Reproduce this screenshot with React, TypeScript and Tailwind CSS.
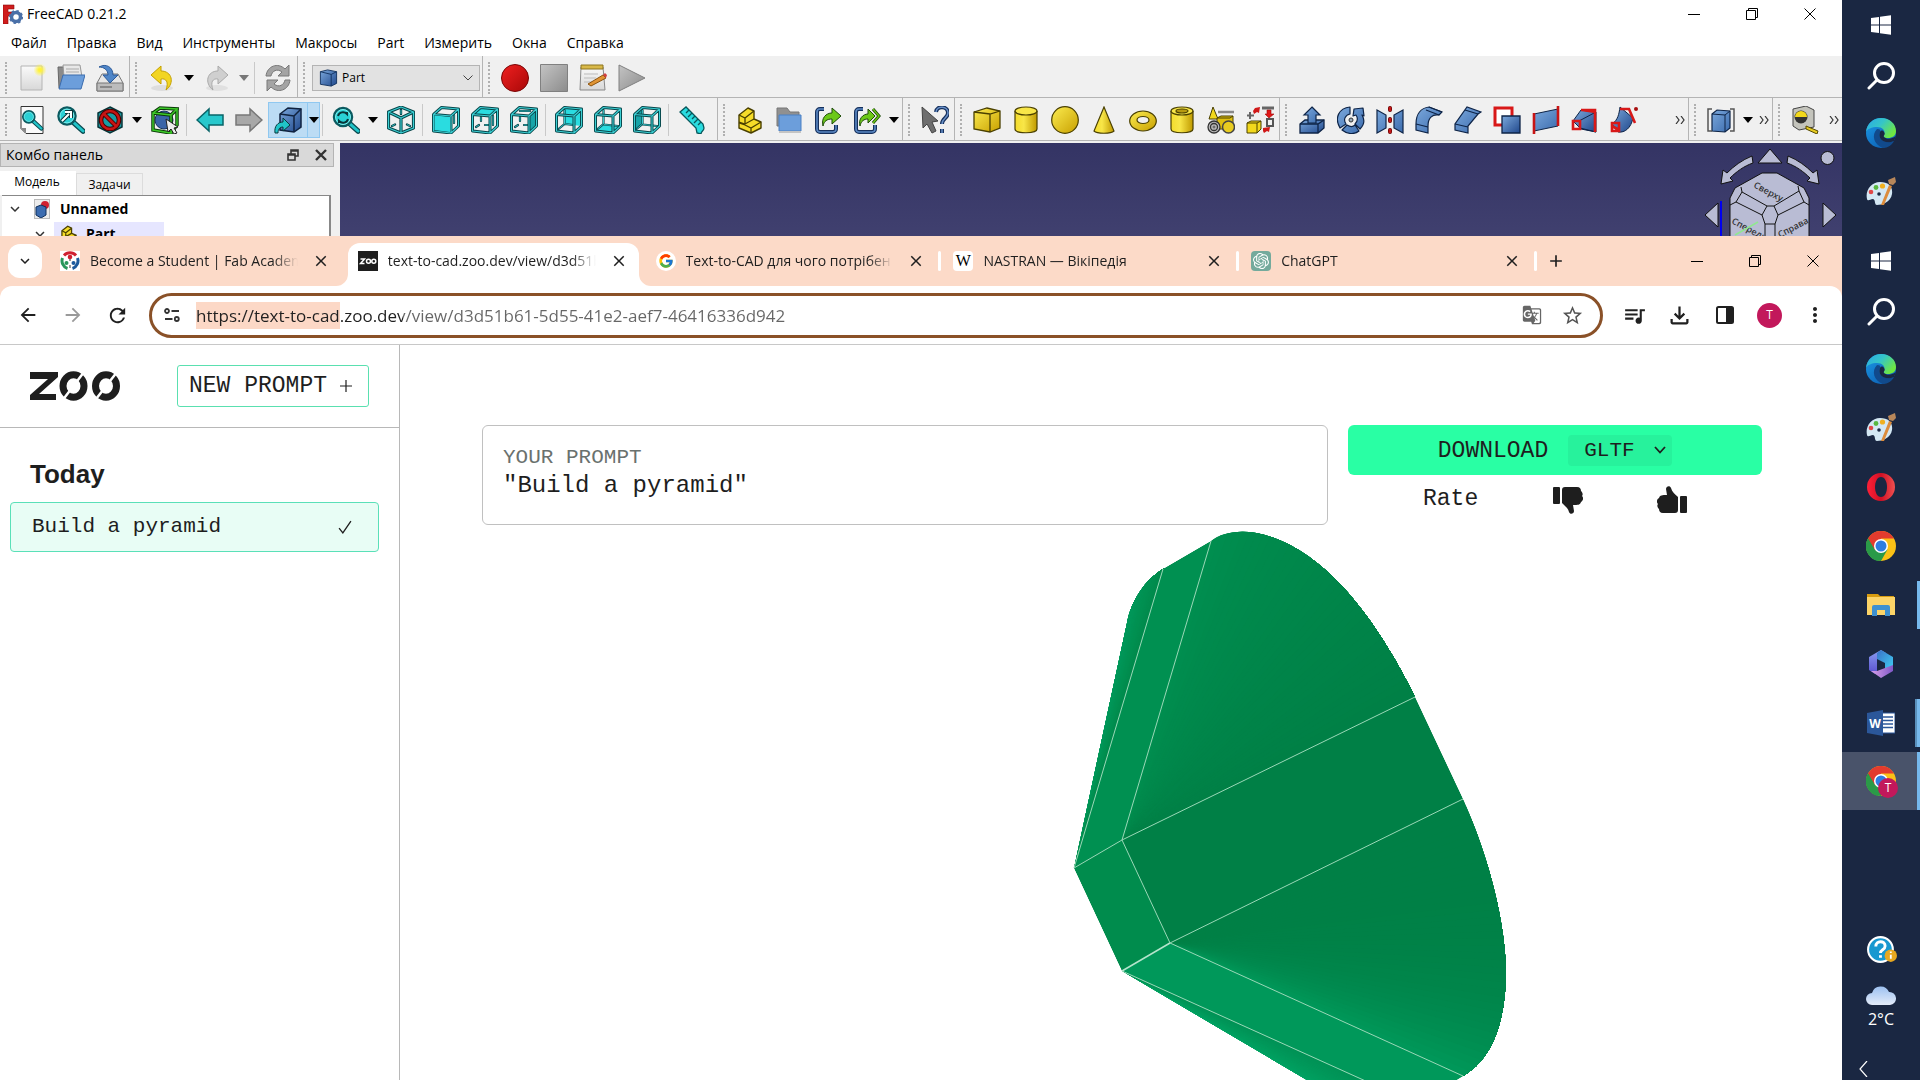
import React from "react";
import {
  MdArrowBack, MdArrowForward, MdRefresh, MdStarBorder, MdQueueMusic, MdOutlineFileDownload,
  MdMoreVert, MdClose, MdAdd, MdExpandMore, MdGTranslate,
} from "react-icons/md";
import { FcGoogle } from "react-icons/fc";
import { SiOpenai } from "react-icons/si";

type Kids = { children?: React.ReactNode };

/* ---------- shared gradients ---------- */

function Defs() {
  return (
    <svg width="0" height="0" className="absolute" aria-hidden="true">
      <defs>
        <linearGradient id="blue" x1="0" y1="0" x2="1" y2="1">
          <stop offset="0" stopColor="#7ba8dc" /><stop offset="1" stopColor="#20488c" />
        </linearGradient>
        <linearGradient id="soft" x1="0" y1="0" x2="1" y2="1">
          <stop offset="0" stopColor="#7ba8dc" /><stop offset="1" stopColor="#3c6cae" />
        </linearGradient>
        <linearGradient id="yellow" x1="0" y1="0" x2="1" y2="1">
          <stop offset="0" stopColor="#fcec50" /><stop offset="1" stopColor="#c8a000" />
        </linearGradient>
        <linearGradient id="yellowH" x1="0" y1="0" x2="1" y2="0">
          <stop offset="0" stopColor="#f4dc2c" /><stop offset="0.4" stopColor="#f8e648" /><stop offset="1" stopColor="#c09a00" />
        </linearGradient>
        <linearGradient id="grey" x1="0" y1="0" x2="1" y2="1">
          <stop offset="0" stopColor="#c4c4c4" /><stop offset="1" stopColor="#8c8c8c" />
        </linearGradient>
        <linearGradient id="paper" x1="0" y1="0" x2="0" y2="1">
          <stop offset="0" stopColor="#fafafa" /><stop offset="1" stopColor="#d8d8d8" />
        </linearGradient>
        <linearGradient id="red" x1="0" y1="0" x2="1" y2="1">
          <stop offset="0" stopColor="#f02020" /><stop offset="1" stopColor="#a80808" />
        </linearGradient>
        <radialGradient id="sun"><stop offset="0.2" stopColor="#fff23a" /><stop offset="1" stopColor="#fff23a" stopOpacity="0" /></radialGradient>
        <linearGradient id="edgeTop" x1="0" y1="0" x2="1" y2="0.6">
          <stop offset="0" stopColor="#2aa8e8" /><stop offset="0.5" stopColor="#35c5c8" /><stop offset="1" stopColor="#70e840" />
        </linearGradient>
        <linearGradient id="edgeLow" x1="0" y1="0" x2="0.8" y2="1">
          <stop offset="0" stopColor="#1b9be8" /><stop offset="1" stopColor="#0c5cb0" />
        </linearGradient>
        <linearGradient id="opera" x1="0" y1="0" x2="1" y2="0">
          <stop offset="0" stopColor="#ff2038" /><stop offset="0.5" stopColor="#d01024" /><stop offset="1" stopColor="#f05050" />
        </linearGradient>
        <linearGradient id="m1" x1="0" y1="0" x2="0" y2="1"><stop offset="0" stopColor="#8a9cf0" /><stop offset="1" stopColor="#5a50d0" /></linearGradient>
        <linearGradient id="m2" x1="0" y1="0" x2="1" y2="1"><stop offset="0" stopColor="#3a70c8" /><stop offset="1" stopColor="#40d0f4" /></linearGradient>
        <linearGradient id="m3" x1="0" y1="0" x2="1" y2="0"><stop offset="0" stopColor="#d8a0e8" /><stop offset="1" stopColor="#8058c8" /></linearGradient>
        <linearGradient id="cloud" x1="0" y1="0" x2="0" y2="1"><stop offset="0" stopColor="#9cc0f0" /><stop offset="1" stopColor="#e4ecfa" /></linearGradient>
      </defs>
    </svg>
  );
}

function Ico({ children }: Kids) {
  return <svg viewBox="0 0 28 28" className="h-7 w-7 shrink-0" fill="none" aria-hidden="true">{children}</svg>;
}

/* ---------- FreeCAD icons ---------- */

const NewFile = () => (
  <Ico><path d="M3 2h21v24H3z" fill="url(#paper)" stroke="#b4b4b4" /><circle cx="22" cy="6" r="6.5" fill="url(#sun)" /></Ico>
);
const OpenFile = () => (
  <Ico>
    <path d="M1 3h8l2 3h12v18H2z" fill="#8a8a8a" stroke="#666" />
    <path d="M6 1h17l2 12H7z" fill="#e8e8e8" stroke="#999" /><path d="M9 5h13M9 8h13" stroke="#aaa" />
    <path d="M6 11h22l-4 14H2z" fill="#6c9edb" stroke="#3b6cae" />
  </Ico>
);
const Save = () => (
  <Ico>
    <path d="M6 10h16l5 9v8H1v-8z" fill="#e6e6e6" stroke="#777" /><path d="M1 19h26v8H1z" fill="#bcbcbc" stroke="#777" /><path d="M4 23h12" stroke="#888" strokeWidth="2" />
    <path d="M3 3c7-4 14 0 14 8h5l-8 8-7-8h5c0-5-4-8-9-8z" fill="#4f86c8" stroke="#2c5a99" />
  </Ico>
);
const Undo = () => (
  <Ico><ellipse cx="14" cy="24" rx="11" ry="3" fill="#ddd" /><path d="M3 11 13 2v5c11 0 14 12 5 19 3-8 0-12-5-11v5z" fill="#f2d522" stroke="#c4a000" /></Ico>
);
const Redo = () => (
  <Ico><ellipse cx="14" cy="24" rx="11" ry="3" fill="#e0e0e0" /><path d="M25 11 15 2v5C4 7 1 19 10 26c-3-8 0-12 5-11v5z" fill="#cfcfcf" stroke="#aaa" /></Ico>
);
const Refresh = () => (
  <Ico>
    <path d="M2 12C3 2 14-2 21 5l4-4v11H14l4-4C13 4 8 7 7 12z" fill="#a4a4a4" stroke="#787878" />
    <path d="M26 16c-1 10-12 14-19 7l-4 4V16h11l-4 4c5 4 10 1 11-4z" fill="#a4a4a4" stroke="#787878" />
  </Ico>
);
const Record = () => <Ico><circle cx="14" cy="14" r="13.5" fill="url(#red)" stroke="#7a0606" /></Ico>;
const Stop = () => <Ico><path d="M.5.5h27v27H.5z" fill="url(#grey)" stroke="#808080" /></Ico>;
const Macro = () => (
  <Ico>
    <path d="M2 3h22l2 23H1z" fill="url(#paper)" stroke="#888" /><path d="M2 1h22v4H2z" fill="#d8b848" stroke="#8c7420" />
    <path d="M5 10h14M5 14h12M5 18h8" stroke="#bbb" /><path d="m9 20 15-9 3 3-15 8z" fill="#e09434" stroke="#8c5410" /><path d="m24 11 3 3 1-3-2-2z" fill="#d04040" />
  </Ico>
);
const Play = () => <Ico><path d="M1 1v26l26-13z" fill="url(#grey)" stroke="#808080" /></Ico>;

const lens = (cx: number, cy: number, r: number) => (
  <>
    <path d={`M${cx + r * 0.7} ${cy + r * 0.7} 26 25`} stroke="#0b4a50" strokeWidth="5.5" strokeLinecap="round" />
    <path d={`M${cx + r * 0.7} ${cy + r * 0.7} 26 25`} stroke="#20c4c8" strokeWidth="3" strokeLinecap="round" />
    <circle cx={cx} cy={cy} r={r} fill="#2ad0d4" stroke="#0b5a60" strokeWidth="2.5" />
    <circle cx={cx} cy={cy} r={r - 1.5} stroke="#7ff0f0" strokeWidth="1" />
  </>
);
const FitAll = () => (
  <Ico><path d="M3 .5h22v27H8l-5-5z" fill="#fafafa" stroke="#333" /><path d="M3 22h5v5z" fill="#888" /><g transform="translate(3 3) scale(.78)">{lens(10, 10, 7.5)}</g></Ico>
);
const FitSel = () => <Ico>{lens(10, 10, 8.5)}<path d="m5 15 7-7M8 6h6v6" stroke="#0a3438" strokeWidth="4" /><path d="m5 15 7-7M8 6h6v6" stroke="#fff" strokeWidth="2" /></Ico>;
const DrawStyle = () => (
  <Ico>
    <path d="m14 1 12 6v14l-12 6-12-6V7z" fill="#189ca4" stroke="#07363a" strokeWidth="1.5" />
    <circle cx="14" cy="14" r="9" stroke="#4a0000" strokeWidth="4.5" /><path d="m8 8 12 12" stroke="#4a0000" strokeWidth="4.500" />
    <circle cx="14" cy="14" r="9" stroke="#c81414" strokeWidth="2.500" /><path d="m8 8 12 12" stroke="#c81414" strokeWidth="2.500" />
  </Ico>
);
const BoxSelect = () => (
  <Ico>
    <circle cx="13" cy="14" r="9" fill="#3a64a8" stroke="#16305c" />
    <path d="M2 7 20 9v18L2 24zM2 7l7-5 17 1-6 6M26 3v16l-6 8" stroke="#0a3a08" strokeWidth="3.5" />
    <path d="M2 7 20 9v18L2 24zM2 7l7-5 17 1-6 6M26 3v16l-6 8" stroke="#3cc828" strokeWidth="1.5" />
    <path d="m15 13 12 8-4 1 3 5-3 1-3-5-3 3z" fill="#eee" stroke="#222" />
  </Ico>
);
const Arrow = ({ flip, fill, line }: { flip?: boolean; fill: string; line: string }) => (
  <Ico><path d={flip ? "M27 14 15 3v6H1v10h14v6z" : "M1 14 13 3v6h14v10H13v6z"} fill={fill} stroke={line} strokeWidth="1.5" /></Ico>
);
const LinkCube = () => (
  <Ico>
    <path d="m6 8 8-6 13 1v18l-7 5-14-2z" fill="url(#blue)" stroke="#10223f" strokeWidth="1.5" /><path d="m6 8 14 2 7-7M20 10v16" stroke="#10223f" strokeWidth="1.5" />
    <path d="M1 27c-1-7 3-11 8-11v-4l7 7-7 6v-4c-3 0-5 2-5 6z" fill="#20c4c8" stroke="#08383c" />
  </Ico>
);
const SyncLens = () => <Ico>{lens(11, 11, 9)}<path d="M6 10c1-4 6-5 9-2v-2M16 13c-1 4-6 5-9 2v2" stroke="#0a3438" strokeWidth="2" /></Ico>;
const isoLines = "m14 1 12.500 5v16L14 27 1.500 22V6zM1.500 6 14 12l12.500-6M14 12v15";
const isoInner = "M14 4v4M5 20l3-1.500M23 20l-3-1.500";
const IsoCube = () => (
  <Ico>
    <path d={isoLines} stroke="#07464a" strokeWidth="3.2" strokeLinejoin="round" /><path d={isoLines} stroke="#3ccfd4" strokeWidth="1.2" strokeLinejoin="round" />
    <path d={isoInner} stroke="#07464a" strokeWidth="2.4" strokeLinecap="round" /><path d={isoInner} stroke="#3ccfd4" strokeWidth=".8" />
  </Ico>
);
const faces: Record<string, string> = {
  front: "M1.500 8.500 19 10v17L1.500 25z", top: "m1.500 8.500 8-7L26.500 3 19 10z", right: "m19 10 7.500-7v17L19 27z",
  rear: "M10 2 26 3v17l-16-2z", bottom: "m1.500 25 8-6 17 1L19 27z", left: "m1.500 8.500 8-6.500v17l-8 6z",
};
const cubeLines = "M1.500 8.500 19 10v17L1.500 25zM1.500 8.500l8-7L26.500 3 19 10M26.500 3v17L19 27";
const cubeInner: Record<string, string> = {
  front: "M22 9v8", top: "M10 11v4M5 21l3-2M14 19h3M22 10v9", right: "M10 11v4M5 21l3-2M14 19h3M10 5h10",
  rear: "M9.500 4v14l-6 5M10 18l8 1M9.500 10v7", bottom: "M9.500 4v14l-6 5M10 18.500l14 1.500M9.500 10v7", left: "M9.500 4v14l-6 5M10 18.500l14 1.500M9.500 10v7",
};
const ViewCube = ({ face }: { face: string }) => (
  <Ico>
    <path d={faces[face]} fill={face === "left" || face === "right" ? "#18a4a8" : "#2adce0"} />
    <path d={cubeInner[face]} stroke="#07464a" strokeWidth="2.2" strokeLinecap="round" /><path d={cubeInner[face]} stroke="#3ccfd4" strokeWidth=".8" />
    <path d={cubeLines} stroke="#07464a" strokeWidth="3" strokeLinejoin="round" />
    <path d={cubeLines} stroke="#3ccfd4" strokeWidth="1.1" strokeLinejoin="round" />
    {face === "front" && <path d="M2.500 9.500 18 11v15L2.500 24z" fill="#2adce0" />}
  </Ico>
);
const Ruler = () => <Ico><path d="m2 6 6-5 17 17 1 4c0 3-3 3-3 6l-4-1-1-5z" fill="#2adce0" stroke="#08585c" strokeWidth="1.3" /><path d="m11 4-3 3M14 7l-4 4M17 10l-3 3M20 13l-4 4M23 16l-3 3" stroke="#08585c" strokeWidth="1.3" /></Ico>;
const PartSteps = () => (
  <Ico>
    <path d="m3 9 9-7 6 3v8l7 3v6l-10 5-12-5z" fill="#f6dc28" stroke="#4a4000" strokeWidth="1.4" strokeLinejoin="round" />
    <path d="m3 9 6 3 9-7M9 12v6l9-5M3 17l6 2 6 3 10-6M15 22v5M9 18l-6-2" stroke="#4a4000" strokeWidth="1.3" />
  </Ico>
);
const Group = () => <Ico><path d="M2 2h10l3 4h9v14H2z" fill="#909090" stroke="#777" /><path d="M4 9h22v16H4z" fill="#6c9edb" stroke="#4a80c4" /><path d="M4 26h22" stroke="#c4c4c4" strokeWidth="2" /></Ico>;
const LinkMake = ({ multi }: { multi?: boolean }) => (
  <Ico>
    <path d="M10 3H6a3 3 0 0 0-3 3v17a3 3 0 0 0 3 3h13a3 3 0 0 0 3-3v-4" stroke="#16305c" strokeWidth="4" />
    <path d="M10 3H6a3 3 0 0 0-3 3v17a3 3 0 0 0 3 3h13a3 3 0 0 0 3-3v-4" stroke="#5a88c4" strokeWidth="1.6" />
    <path d={multi ? "M7 20c-2-7 3-12 8-12V3l7 7-7 7v-4c-4 0-7 2-8 7z" : "M9 20C7 12 12 7 18 7V2l9 8-9 8v-5c-5 0-8 2-9 7z"} fill="#6cc818" stroke="#1c4a08" />
    {multi && <path d="m20 3 6 7-6 7" stroke="#1c4a08" strokeWidth="3" />}
    {multi && <path d="m20 3 6 7-6 7" stroke="#6cc818" strokeWidth="1.4" />}
  </Ico>
);
const WhatsThis = () => (
  <Ico>
    <path d="m1 1 16 14-6 1 4 9-4 2-5-9-4 4z" fill="#6e6e6e" stroke="#444" />
    <path d="M15 6c1-7 12-6 12 1 0 5-6 5-6 11M21 23v4" stroke="#16305c" strokeWidth="4" /><path d="M15 6c1-7 12-6 12 1 0 5-6 5-6 11M21 23v4" stroke="#6890c8" strokeWidth="1.5" />
  </Ico>
);
const YBox = () => <Ico><path d="m1 6 13-4 13 3v17l-10 4-16-3z" fill="url(#yellow)" stroke="#4a4000" strokeWidth="1.3" /><path d="m1 6 16 2 10-3M17 8v18" stroke="#4a4000" strokeWidth="1.3" /></Ico>;
const YCyl = () => <Ico><path d="M3 5v18c0 5 22 5 22 0V5" fill="url(#yellowH)" stroke="#4a4000" strokeWidth="1.2" /><ellipse cx="14" cy="5" rx="11" ry="4" fill="#f8e648" stroke="#4a4000" strokeWidth="1.2" /></Ico>;
const YSphere = () => <Ico><circle cx="14" cy="14" r="13.3" fill="url(#yellow)" stroke="#4a4000" strokeWidth="1.2" /></Ico>;
const YCone = () => <Ico><path d="M14 1 4 25c3 3 17 3 20 0z" fill="url(#yellowH)" stroke="#4a4000" strokeWidth="1.2" /></Ico>;
const YTorus = () => <Ico><ellipse cx="14" cy="15" rx="13.3" ry="10" fill="url(#yellow)" stroke="#4a4000" strokeWidth="1.2" /><ellipse cx="14" cy="14" rx="6" ry="3.5" fill="#f0f0f0" stroke="#4a4000" strokeWidth="1.2" /></Ico>;
const YTube = () => <Ico><path d="M3 5v18c0 5 22 5 22 0V5" fill="url(#yellowH)" stroke="#4a4000" strokeWidth="1.2" /><ellipse cx="14" cy="5" rx="11" ry="4" fill="#f8e648" stroke="#4a4000" strokeWidth="1.2" /><ellipse cx="14" cy="5" rx="6" ry="2" fill="#b89a10" stroke="#4a4000" strokeWidth="1.2" /></Ico>;
const Primitives = () => (
  <Ico>
    <path d="M6 1 2 13h9z" fill="#f2d81c" stroke="#4a4000" /><path d="M11 6h16" stroke="#888" strokeWidth="2.5" />
    <path d="m10 12 4-2h12v10l-4 3H10z" fill="#e0c010" stroke="#4a4000" /><path d="M10 12h13l3-2" stroke="#4a4000" /><circle cx="21.500" cy="21" r="6" fill="#e8cc20" stroke="#444" strokeWidth="1.5" />
    <circle cx="7" cy="21" r="6" fill="#bbb" stroke="#333" strokeWidth="1.300" /><circle cx="7" cy="21" r="3.500" stroke="#333" strokeWidth="1.300" /><circle cx="7" cy="21" r="1" stroke="#555" />
  </Ico>
);
const ShapeBuilder = () => (
  <Ico>
    <path d="m1 17 4-2h10v8l-4 4H1z" fill="#f2d81c" stroke="#4a4000" /><path d="M1 17h10l4-2M11 17v10" stroke="#4a4000" />
    <path d="M4 6v7M1 9.500h7" stroke="#666" strokeWidth="2" /><path d="M16 2h12" stroke="#666" strokeWidth="3" /><path d="M21 4h4v4h3l-5 4-4-4h2z" fill="#e01818" stroke="#a00808" strokeWidth=".6" />
    <path d="m9 2 5-1-1 6-2-1-3 2-1-3z" fill="#d01818" /><path d="M21 13h6v7h-6z" stroke="#555" strokeWidth="2" /><path d="m17 22 7-1-1 5-2-1-3 2-1-2z" fill="#d01818" />
  </Ico>
);
const Extrude = () => <Ico><path d="m2 18 5-4h19v8l-6 5H2z" fill="url(#blue)" stroke="#0e2447" strokeWidth="1.3" /><path d="M2 18h18l6-4M20 18v9" stroke="#0e2447" strokeWidth="1.3" /><path d="m14 1 8 8h-4v8h-8V9H6z" fill="url(#soft)" stroke="#0e2447" strokeWidth="1.2" /></Ico>;
const Revolve = () => (
  <Ico>
    <path d="M13 1v7c-5 1-7 6-4 10l-6 4C-3 12 2 2 13 1zM5 24l5-5c3 2 6 2 8 0l4 6c-5 4-12 3-17-1zM17 3l9-1 1 8-2-1c3 5 2 10-2 14l-5-5c3-3 3-6 1-9l-3 1z" fill="url(#soft)" stroke="#0e2447" strokeWidth="1.2" strokeLinejoin="round" />
    <circle cx="14" cy="14" r="2" fill="#9ab" stroke="#333" />
  </Ico>
);
const Mirror = () => <Ico><path d="m1 4 9 5v13l-9 5zM27 4l-9 5v13l9 5z" fill="url(#soft)" stroke="#0e2447" strokeWidth="1.2" /><path d="M14 2v2M14 13v2M14 24v2" stroke="#600" strokeWidth="4" strokeLinecap="round" /><path d="M14 2v2M14 13v2M14 24v2" stroke="#c41818" strokeWidth="2.600" strokeLinecap="round" /></Ico>;
const Fillet = () => <Ico><path d="M1 18C1 8 6 2 14 1l13 5-3 3c-7-1-11 3-11 11v7L1 24z" fill="url(#soft)" stroke="#0e2447" strokeWidth="1.2" /><path d="m1 18 12 3M24 9 11 4M27 6 14 1" stroke="#0e2447" strokeWidth="1.2" /></Ico>;
const Chamfer = () => <Ico><path d="M1 24v-6L13 1l14 5-3 2-10 12v7z" fill="url(#soft)" stroke="#0e2447" strokeWidth="1.2" /><path d="m1 18 13 3M24 8 11 4" stroke="#0e2447" strokeWidth="1.2" /></Ico>;
const FaceWires = () => <Ico><path d="M2 2h17v17H2z" fill="#fff" stroke="#d81818" strokeWidth="3" /><path d="M9 10h18v17H9z" fill="url(#blue)" stroke="#0e2447" strokeWidth="1.3" /></Ico>;
const Ruled = () => <Ico><path d="M2 8 26 3v17L2 25z" fill="url(#soft)" stroke="#0e2447" /><path d="M2 7v21M26 0v20" stroke="#c81414" strokeWidth="2.6" /></Ico>;
const Loft = () => <Ico><path d="m2 15 8-11 15 2v20l-15-3z" fill="url(#blue)" stroke="#0e2447" /><path d="m8 15 17-9M9 22l16 4" stroke="#0e2447" /><path d="M10 4h14v22M2 15h7v8H2zM11 4l14 2" stroke="#d81818" strokeWidth="2.600" /></Ico>;
const Sweep = () => <Ico><path d="M2 18C8 14 9 8 10 1l13 11c-2 10-8 15-15 14z" fill="url(#blue)" stroke="#0e2447" /><path d="M10 3h9l6 14" stroke="#d81818" strokeWidth="2.6" /><path d="M2 17h7v8H2zM2 20l7 4" stroke="#d81818" strokeWidth="2.600" /><circle cx="26" cy="3" r="2" fill="#a81010" /></Ico>;
const BoundBox = () => <Ico><path d="m5 8 5-4 13 1v17l-5 4-13-1z" fill="url(#soft)" stroke="#0e2447" strokeWidth="1.2" /><path d="m5 8 13 1 5-4M18 9v17" stroke="#0e2447" /><path d="M5 3H1v22h4M23 3h4v22h-4" stroke="#555" strokeWidth="1.5" /></Ico>;
const Measure = () => <Ico><path d="M2 3 15 0l8 4v17l-15 3-6-4z" fill="#c4c4bc" stroke="#444" /><circle cx="10" cy="11" r="6.5" fill="#333" /><path d="M4 11a6 6 0 0 1 12 0z" fill="#f2d81c" /><path d="m15 20 12 5-1 3-11-5z" fill="#e8cc20" stroke="#554800" /></Ico>;
const SmallCube = ({ className }: { className: string }) => (
  <svg viewBox="0 0 20 20" className={className} aria-hidden="true"><path d="m1 3 8-2 10 2v13l-6 3L1 17z" fill="url(#blue)" stroke="#10305c" /><path d="m1 3 12 3 6-3M13 6v13" fill="none" stroke="#10305c" /></svg>
);

/* ---------- FreeCAD toolbar pieces ---------- */

const Tool = ({ label, children }: Kids & { label: string }) => (
  <button type="button" aria-label={label} className="flex h-9 w-[39px] shrink-0 items-center justify-center">{children}</button>
);
const Drop = ({ label, muted, slim }: { label: string; muted?: boolean; slim?: boolean }) => (
  <button type="button" aria-label={label} className={`flex h-9 shrink-0 items-center justify-center ${slim ? "w-3" : "w-4"}`}>
    <svg viewBox="0 0 10 6" className="h-1.5 w-2.5"><path d="M0 0h10L5 6z" fill={muted ? "#777" : "#000"} /></svg>
  </button>
);
const Line = () => <span className="ml-0.5 mr-[3px] h-8 w-px shrink-0 bg-[#c9c9c9]" />;
const Grip = () => <span className="mx-[5px] h-8 w-0 shrink-0 border-l-2 border-dotted border-[#b0b0b0]" />;
const Bar = ({ children, grow, last }: Kids & { grow?: boolean; last?: boolean }) => (
  <div className={`flex items-center pt-0.5 ${grow ? "flex-1" : "shrink-0"} ${last ? "" : "border-r border-[#b4b4b4]"}`}><Grip />{children}</div>
);
const More = ({ label }: { label: string }) => (
  <button type="button" aria-label={label} className="ml-auto flex h-9 w-4 shrink-0 items-center justify-center">
    <svg viewBox="0 0 10 8" className="h-2 w-2.5" fill="none" stroke="#333" strokeWidth="1.2"><path d="m1 0 3 4-3 4M6 0l3 4-3 4" /></svg>
  </button>
);

function WindowButtons({ className }: { className: string }) {
  return (
    <div className={className}>
      <button type="button" aria-label="Minimize" className="flex h-7 w-[58px] items-center justify-center"><svg viewBox="0 0 12 12" className="h-3 w-3" stroke="#000" fill="none"><path d="M0 6.5h12" /></svg></button>
      <button type="button" aria-label="Restore" className="flex h-7 w-[58px] items-center justify-center"><svg viewBox="0 0 12 12" className="h-3 w-3" stroke="#000" fill="none"><path d="M.5 2.5h9v9h-9zM2.5 2.5v-2h9v9h-2" /></svg></button>
      <button type="button" aria-label="Close" className="flex h-7 w-[58px] items-center justify-center"><svg viewBox="0 0 12 12" className="h-3 w-3" stroke="#000" fill="none"><path d="m.5.5 11 11m0-11-11 11" /></svg></button>
    </div>
  );
}

function NavCube() {
  return (
    <svg viewBox="1700 143 142 93" className="h-[93px] w-[142px]" fill="#b9bcd4" stroke="#111" aria-label="Navigation cube">
      <path d="m1770 149 12 14h-24zM1705 215l13-12v24zM1836 215l-13-12v24z" />
      <circle cx="1827.5" cy="158" r="6.5" />
      <path d="M1752 156c-10 4-18 10-25 17l-4-3-2 14 12-3-3-3c6-6 14-12 23-15zM1788 156c10 4 18 10 25 17l4-3 2 14-12-3 3-3c-6-6-14-12-23-15z" />
      <path d="M1762 173h15l27 15 5 10v44h-79v-44l5-10z" />
      <path d="m1741 187 1 5 25 14h7l25-15-1-5M1742 192l-6 10 26 13 5-9M1799 191l5 11-26 13-4-9M1730 205l6-3M1809 205l-5-3M1762 215l3 9h10l3-9M1765 224v14M1775 224v14" fill="none" />
      <g fill="#333" stroke="none" fontFamily="Open Sans, sans-serif" fontSize="9" fontWeight="600">
        <text x="1753" y="187" transform="rotate(28 1753 187)">Сверху</text>
        <text x="1731" y="223" transform="rotate(28 1731 223)">Спереди</text>
        <text x="1780" y="238" transform="rotate(-28 1780 238)">Справа</text>
      </g>
      <path d="M1721 201v36" stroke="#0000f0" strokeWidth="2" /><path d="m1735 235 23-13" stroke="#90e890" strokeWidth="1.5" />
    </svg>
  );
}

const menus = ["Файл", "Правка", "Вид", "Инструменты", "Макросы", "Part", "Измерить", "Окна", "Справка"];

function FreeCad() {
  return (
    <section className="flex h-[236px] flex-col overflow-hidden bg-white">
      <header className="flex h-7 items-center pl-[3px] text-sm text-black">
        <svg viewBox="0 0 20 20" className="h-5 w-5" aria-hidden="true">
          <path d="M0 1h11v4H5v3h5v4H5v8H0z" fill="#d01c1c" stroke="#8c0c0c" strokeWidth=".6" />
          <circle cx="13" cy="13" r="4.500" fill="none" stroke="#4a70a8" strokeWidth="3.5" /><circle cx="13" cy="13" r="6.3" fill="none" stroke="#4a70a8" strokeWidth="1.6" strokeDasharray="2.4 2.5" />
        </svg>
        <h1 className="ml-1">FreeCAD 0.21.2</h1>
        <WindowButtons className="ml-auto mr-[3px] flex" />
      </header>
      <nav className="flex h-7 items-center gap-5 pl-[11px] pt-0.5 text-sm text-black">
        {menus.map((m) => <button type="button" key={m}>{m}</button>)}
      </nav>
      <div className="flex h-[42px] items-stretch border-b border-[#b4b4b4] bg-[#f0f0f0]">
        <Bar>
          <Tool label="New"><NewFile /></Tool><Tool label="Open"><OpenFile /></Tool><Tool label="Save"><Save /></Tool>
        </Bar>
        <Bar>
          <Tool label="Undo"><Undo /></Tool><Drop label="Undo list" /><Tool label="Redo"><Redo /></Tool><Drop label="Redo list" muted />
          <Line /><Tool label="Refresh"><Refresh /></Tool>
        </Bar>
        <Bar>
          <div className="mx-0.5 grid h-[26px] w-[168px] items-center border border-[#b4b4b4] bg-[#e2e2e2]">
            <SmallCube className="col-start-1 row-start-1 ml-[5px] h-[18px] w-[21px]" />
            <select aria-label="Workbench" className="col-start-1 row-start-1 w-full appearance-none bg-transparent pl-[29px] text-xs text-black"><option>Part</option></select>
            <svg viewBox="0 0 10 6" className="col-start-1 row-start-1 mr-1.5 h-1.5 w-2.5 justify-self-end" fill="none" stroke="#444"><path d="m.5.5 4.500 4.500 4.500-4.500" /></svg>
          </div>
        </Bar>
        <Bar last>
          <Tool label="Record macro"><Record /></Tool><Tool label="Stop macro"><Stop /></Tool><Tool label="Macros"><Macro /></Tool><Tool label="Run macro"><Play /></Tool>
        </Bar>
      </div>
      <div className="flex h-[43px] items-stretch border-b border-[#b4b4b4] bg-[#f0f0f0]">
        <Bar>
          <Tool label="Fit all"><FitAll /></Tool><Tool label="Fit selection"><FitSel /></Tool><Tool label="Draw style"><DrawStyle /></Tool><Drop label="Draw styles" />
          <Tool label="Box selection"><BoxSelect /></Tool><Line />
          <Tool label="Back"><Arrow fill="#28c8cc" line="#086468" /></Tool><Tool label="Forward"><Arrow flip fill="#a8a8a8" line="#777" /></Tool>
          <div className="flex bg-[#bcdcf4] outline outline-[#90c8f0] -outline-offset-1"><Tool label="Link navigation"><LinkCube /></Tool><span className="w-px bg-[#90c8f0]" /><Drop slim label="Link actions" /></div><Line />
          <Tool label="Sync view"><SyncLens /></Tool><Drop label="Zoom modes" /><Tool label="Isometric"><IsoCube /></Tool><Line />
          {["front", "top", "right"].map((f) => <Tool key={f} label={f}><ViewCube face={f} /></Tool>)}<Line />
          {["rear", "bottom", "left"].map((f) => <Tool key={f} label={f}><ViewCube face={f} /></Tool>)}<Line />
          <Tool label="Measure distance"><Ruler /></Tool><span className="w-1.5" />
        </Bar>
        <Bar>
          <Tool label="Create part"><PartSteps /></Tool><Tool label="Create group"><Group /></Tool><Tool label="Make link"><LinkMake /></Tool><Tool label="Make sub-link"><LinkMake multi /></Tool><Drop label="Links" />
        </Bar>
        <Bar><Tool label="What's this"><WhatsThis /></Tool></Bar>
        <Bar>
          <Tool label="Box"><YBox /></Tool><Tool label="Cylinder"><YCyl /></Tool><Tool label="Sphere"><YSphere /></Tool><Tool label="Cone"><YCone /></Tool>
          <Tool label="Torus"><YTorus /></Tool><Tool label="Tube"><YTube /></Tool><Tool label="Primitives"><Primitives /></Tool><Tool label="Shape builder"><ShapeBuilder /></Tool>
        </Bar>
        <Bar grow>
          <Tool label="Extrude"><Extrude /></Tool><Tool label="Revolve"><Revolve /></Tool><Tool label="Mirror"><Mirror /></Tool><Tool label="Fillet"><Fillet /></Tool><Tool label="Chamfer"><Chamfer /></Tool>
          <Tool label="Face from wires"><FaceWires /></Tool><Tool label="Ruled surface"><Ruled /></Tool><Tool label="Loft"><Loft /></Tool><Tool label="Sweep"><Sweep /></Tool><More label="More part tools" />
        </Bar>
        <Bar><Tool label="Bounding box"><BoundBox /></Tool><Drop label="Compound" /><More label="More boolean tools" /></Bar>
        <Bar last><Tool label="Measure"><Measure /></Tool><span className="w-0.5" /><More label="More measure tools" /></Bar>
      </div>
      <div className="flex min-h-0 flex-1 bg-[#f0f0f0] pt-0.5">
        <aside className="mr-1.5 flex w-[334px] shrink-0 flex-col text-black">
          <div className="flex h-6 shrink-0 items-center border border-[#b4b4b4] bg-[#d9d9d9] pl-[5px] text-sm">
            <h2>Комбо панель</h2>
            <button type="button" aria-label="Float panel" className="ml-auto mr-4 h-3 w-3"><svg viewBox="0 0 12 12" fill="none" stroke="#333" strokeWidth="1.6"><path d="M1 5h7v6H1zM4 5V1h7v6H8M1 6h7M4 2h7" /></svg></button>
            <button type="button" aria-label="Close panel" className="mr-1.5 h-3 w-3"><svg viewBox="0 0 12 12" stroke="#333" strokeWidth="2.4"><path d="m1 1 10 10m0-10L1 11" /></svg></button>
          </div>
          <div role="tablist" className="flex h-7 shrink-0 items-end text-xs">
            <button type="button" role="tab" aria-selected="true" className="h-6 w-[76px] bg-white pb-0.5 pr-0.5">Модель</button>
            <button type="button" role="tab" aria-selected="false" className="h-[22px] w-[67px] border border-b-0 border-[#dcdcdc]">Задачи</button>
          </div>
          <ul className="ml-0.5 mr-[3px] flex-1 overflow-hidden border-r-2 border-t border-[#888] bg-white text-sm font-bold">
            <li className="flex h-[26px] items-center pl-1">
              <MdExpandMore className="h-[18px] w-[18px] text-[#333]" />
              <span className="ml-2.5 flex h-5 w-4 items-center justify-center border border-[#bbb] bg-[#ececec]"><svg viewBox="0 0 14 18" className="h-[18px] w-3.5"><circle cx="10" cy="5" r="4" fill="#d02030" /><path d="m1 7 5-2 5 2v8l-5 3-5-3z" fill="#3c6cb0" stroke="#10305c" /></svg></span>
              <span className="ml-2.5">Unnamed</span>
            </li>
            <li className="flex h-6 items-center pl-[29px]">
              <MdExpandMore className="mr-[5px] h-[18px] w-[18px] text-[#333]" />
              <span className="flex h-6 w-[110px] items-center bg-[#e6e6ff] pl-1.5"><svg viewBox="0 0 28 28" className="mr-2 h-[18px] w-[18px]"><path d="m3 9 9-7 6 3v8l7 3v6l-10 5-12-5z" fill="#f6dc28" stroke="#4a4000" strokeWidth="2" /><path d="m3 9 6 3 9-7M9 12v6l9-5M15 22l10-6" fill="none" stroke="#4a4000" strokeWidth="2" /></svg>Part</span>
            </li>
          </ul>
        </aside>
        <div className="flex flex-1 justify-end bg-linear-to-b from-[#343464] to-[#40406f]"><NavCube /></div>
      </div>
    </section>
  );
}

/* ---------- browser ---------- */

const tabs = [
  { title: "Become a Student | Fab Academy", icon: "fab" },
  { title: "text-to-cad.zoo.dev/view/d3d51b61", icon: "zoo" },
  { title: "Text-to-CAD для чого потрібен", icon: "google" },
  { title: "NASTRAN — Вікіпедія", icon: "wiki" },
  { title: "ChatGPT", icon: "gpt" },
];

function Favicon({ kind }: { kind: string }) {
  const box = "flex h-5 w-5 shrink-0 items-center justify-center overflow-hidden";
  if (kind === "zoo") return <span className={`${box} bg-[#1e1e1e]`}><svg viewBox="0 0 20 20" fill="none" stroke="#fff" strokeWidth="1.500"><path d="M2.500 8h4l-4 4.500h4" /><circle cx="10.500" cy="10.200" r="2" /><circle cx="15.800" cy="10.200" r="2" /></svg></span>;
  if (kind === "google") return <span className={`${box} rounded-full bg-white`}><FcGoogle className="h-4 w-4" /></span>;
  if (kind === "wiki") return <span className={`${box} rounded bg-white font-['Liberation_Serif',serif] text-base text-black`}>W</span>;
  if (kind === "gpt") return <span className={`${box} rounded bg-[#74aa9c]`}><SiOpenai className="h-4 w-4 text-white" /></span>;
  return (
    <span className={`${box} bg-white`}>
      <svg viewBox="0 0 20 20" fill="none" strokeWidth="3">
        <path d="M4 4.500a8 8 0 0 1 12 0" stroke="#d02030" /><path d="M17.500 7c1.500 4-.5 9-5 10.500" stroke="#1c5a9c" /><path d="M2.500 7c-1.500 4 .5 9 5 10.500" stroke="#28965a" />
        <circle cx="10" cy="6" r="2.300" fill="#d02030" /><circle cx="6.500" cy="12" r="2" fill="#28965a" /><circle cx="13.500" cy="12" r="2" fill="#1c5a9c" />
        <path d="M10 8v2M10 17v-3" stroke="#333" strokeWidth="1" />
      </svg>
    </span>
  );
}

const Corner = ({ right }: { right?: boolean }) => (
  <svg viewBox="0 0 12 12" className={`absolute bottom-0 h-3 w-3 ${right ? "-right-3" : "-left-3"}`} fill="#fff" aria-hidden="true"><path d={right ? "M0 0v12h12A12 12 0 0 1 0 0" : "M12 0v12H0A12 12 0 0 0 12 0"} /></svg>
);

const tool = "flex h-9 w-[45px] items-center justify-center text-[#202020]";
const url = "https://text-to-cad.zoo.dev/view/d3d51b61-5d55-41e2-aef7-46416336d942";

function BrowserBars() {
  return (
    <>
      <div className="flex h-[50px] shrink-0 items-end bg-[#fcdac8] text-[#1f1f1f]">
        <button type="button" aria-label="Search tabs" className="mb-2 ml-2 flex h-[34px] w-[34px] shrink-0 items-center justify-center rounded-xl bg-white"><MdExpandMore className="h-[18px] w-[18px]" /></button>
        <div role="tablist" className="ml-2 flex min-w-0 max-w-[1482px] flex-1 items-end gap-[7px]">
          {tabs.map((t, i) => (
            <div key={t.title} className={`relative flex h-[43px] min-w-0 flex-1 items-center pb-[7px] pl-2.5 pr-[11px] ${i === 1 ? "rounded-t-xl bg-white" : ""}`}>
              {i === 1 && <Corner />}{i === 1 && <Corner right />}
              <button type="button" role="tab" aria-selected={i === 1} className="flex min-w-0 flex-1 items-center gap-2.5 text-left text-sm">
                <Favicon kind={t.icon} />
                <span className="mr-3.5 flex-1 overflow-hidden whitespace-nowrap mask-r-from-88% mask-r-to-100%">{t.title}</span>
              </button>
              <button type="button" aria-label={`Close ${t.title}`} className="shrink-0"><MdClose className="h-[18px] w-[18px]" /></button>
              {i > 1 && <span className="absolute right-[-5px] h-5 w-[3px] rounded bg-white" />}
            </div>
          ))}
        </div>
        <button type="button" aria-label="New tab" className="mb-[11px] ml-2.5 flex h-7 w-7 items-center justify-center"><MdAdd className="h-5 w-5" /></button>
        <WindowButtons className="ml-auto mb-[11px] flex" />
      </div>
      <div className="shrink-0 bg-[#fcdac8]">
        <div className="flex h-[59px] items-center rounded-t-xl border-b border-[#c8c8c8] bg-white pl-[5px]">
          <button type="button" aria-label="Back" className={tool}><MdArrowBack className="h-[22px] w-[22px]" /></button>
          <button type="button" aria-label="Forward" className={tool}><MdArrowForward className="h-[22px] w-[22px] text-[#9a9a9a]" /></button>
          <button type="button" aria-label="Reload" className={tool}><MdRefresh className="h-[23px] w-[23px]" /></button>
          <div className="mx-[9px] flex h-[45px] min-w-0 flex-1 items-center rounded-full border-[3px] border-[#8a5128] pl-3 pr-2">
            <svg viewBox="0 0 16 16" className="h-4 w-4 shrink-0" fill="none" stroke="#333" strokeWidth="1.800" aria-hidden="true"><circle cx="3" cy="4" r="2" /><path d="M7.500 4H15M1 12h7.500" /><circle cx="12.800" cy="12" r="2" /></svg>
            <input
              aria-label="Address"
              defaultValue={url}
              className="ml-4 h-[27px] min-w-0 flex-1 bg-[linear-gradient(90deg,#202020_0_207px,#666_207px),linear-gradient(90deg,#fcd8c6_0_144px,transparent_144px)] text-[17px] text-transparent outline-none [background-clip:text,border-box]"
            />
            <button type="button" aria-label="Translate" className="flex h-9 w-10 items-center justify-center text-[#666]"><MdGTranslate className="h-5 w-5" /></button>
            <button type="button" aria-label="Bookmark" className="flex h-9 w-10 items-center justify-center text-[#555]"><MdStarBorder className="h-[23px] w-[23px]" /></button>
          </div>
          <button type="button" aria-label="Media" className={tool}><MdQueueMusic className="h-[25px] w-[25px]" /></button>
          <button type="button" aria-label="Downloads" className={tool}><MdOutlineFileDownload className="h-[27px] w-[27px]" /></button>
          <button type="button" aria-label="Side panel" className={tool}><svg viewBox="0 0 18 18" className="h-[18px] w-[18px]"><rect x="1" y="1" width="16" height="16" rx="1.500" fill="none" stroke="#202020" strokeWidth="2" /><path d="M10 1h7v16h-7z" fill="#202020" /></svg></button>
          <button type="button" aria-label="Profile" className={tool}><span className="flex h-[25px] w-[25px] items-center justify-center rounded-full bg-[#c2185b] text-xs text-white">T</span></button>
          <button type="button" aria-label="Menu" className={tool}><MdMoreVert className="h-6 w-6" /></button>
          <span className="w-[5px]" />
        </div>
      </div>
    </>
  );
}

/* ---------- pyramid model ---------- */

const mix = (a: number[], b: number[], t: number) => `rgb(${a.map((v, i) => Math.round(v + (b[i] - v) * t)).join(",")})`;

type FanProps = { apex: [number, number]; from: number; to: number; start: number[]; end: number[]; ease: number };

function Fan({ apex, from, to, start, end, ease }: FanProps) {
  const steps = 40;
  const at = (deg: number) => `${apex[0] + 900 * Math.cos((deg * Math.PI) / 180)} ${apex[1] + 900 * Math.sin((deg * Math.PI) / 180)}`;
  return (
    <>
      {Array.from({ length: steps }, (_, i) => {
        const a = from + ((to - from) * i) / steps;
        return <path key={i} d={`M${apex[0]} ${apex[1]}L${at(a)}L${at(to)}z`} fill={mix(start, end, Math.pow((i + 0.5) / steps, ease))} />;
      })}
    </>
  );
}

const outline = "M1074 868 1127 623C1131 601 1145 580 1163 569L1211 541C1226 529 1256 527 1290 545C1340 571 1382 630 1415 697L1463 799C1490 860 1506 925 1506 975C1505 1025 1491 1060 1463 1076L1440 1090H1324L1122 971z";

function Pyramid() {
  return (
    <svg viewBox="1073 530 434 550" className="mr-[335px] mt-[5px] h-[550px] w-[434px] shrink-0 self-end" aria-label="Pyramid model">
      <clipPath id="solid"><path d={outline} /></clipPath>
      <g clipPath="url(#solid)">
        <path d={outline} fill="#008046" />
        <Fan apex={[1074, 868]} from={-79} to={-73.4} start={[0, 158, 96]} end={[0, 138, 76]} ease={0.8} />
        <path d="M1074 868 1163 569 1211 541 1122 840z" fill="#009051" />
        <Fan apex={[1122, 840]} from={-73.4} to={-26} start={[0, 143, 80]} end={[0, 128, 70]} ease={0.6} />
        <path d="M1122 840 1415 697 1463 799 1170 943z" fill="#008046" />
        <Fan apex={[1170, 943]} from={-26} to={24.4} start={[0, 128, 70]} end={[0, 152, 90]} ease={4} />
        <Fan apex={[1122, 971]} from={32} to={24.4} start={[0, 172, 106]} end={[0, 146, 86]} ease={0.6} />
        <path d="M1122 971 1170 943 1463 1076 1463 1120 1415 1104z" fill="#00985a" />
        <path d="M1074 868 1122 840 1170 943 1122 971z" fill="#008c4d" />
      </g>
      <g fill="none" stroke="#9ad8b8" strokeWidth="1">
        <path d="M1163 569 1074 868 1122 840 1211 541M1122 840 1415 697M1122 840 1170 943 1463 799M1170 943 1463 1076M1122 971 1390 1092" />
        <path d="M1122 971 1170 943" strokeWidth="1.500" stroke="#b4e4cc" />
      </g>
    </svg>
  );
}

/* ---------- web page ---------- */

const mono = "font-['Liberation_Mono',monospace]";

function ZooPage() {
  return (
    <div className="flex min-h-0 flex-1 bg-white text-[#1e1e1e]">
      <aside className="flex w-[400px] shrink-0 flex-col border-r border-[#b8b8b8]">
        <div className="flex h-[83px] items-center justify-between border-b border-[#b8b8b8] pl-[30px] pr-[30px]">
          <a href="#home" aria-label="Zoo">
            <svg viewBox="0 0 90 30" className="h-[30px] w-[90px]">
              <path d="M0 1h28v5L9 23h17v6H0v-5L18 8H0z" fill="#1e1e1e" />
              <ellipse cx="43.500" cy="15" rx="10.500" ry="11.300" fill="none" stroke="#1e1e1e" strokeWidth="7" /><ellipse cx="76" cy="15" rx="10.500" ry="11.300" fill="none" stroke="#1e1e1e" strokeWidth="7" />
              <path d="M32 30 54 1M64.500 30 87 1" stroke="#fff" strokeWidth="2.500" />
            </svg>
          </a>
          <button type="button" className={`flex h-[42px] items-center gap-2 whitespace-nowrap rounded-[3px] border border-[#5ae0b0] px-[11px] text-[23px] ${mono}`}>
            NEW PROMPT
            <svg viewBox="0 0 12 12" className="mx-[5px] h-3 w-3" stroke="#1e1e1e" strokeWidth="1.200"><path d="M0 6h12M6 0v12" /></svg>
          </button>
        </div>
        <h2 className="ml-[30px] mt-[30px] font-['Liberation_Sans',sans-serif] text-[26px] font-bold leading-8">Today</h2>
        <a href="#build-a-pyramid" className={`mx-2.5 mr-5 mt-3 flex h-[50px] items-center justify-between rounded border border-[#5ae0b8] bg-[#e8fdf5] pl-[21px] pr-[26px] text-[21px] ${mono}`}>
          Build a pyramid
          <svg viewBox="0 0 13 13" className="h-3.5 w-3.5" fill="none" stroke="#1e1e1e" strokeWidth="1.200"><path d="m1 7.500 3.500 4.500L12 1" /></svg>
        </a>
      </aside>
      <main className="flex min-w-0 flex-1 flex-col overflow-hidden pt-20">
        <div className="flex items-start gap-5 pl-[82px] pr-20">
          <section className={`h-[100px] min-w-0 flex-1 rounded-md border border-[#c0c0c0] px-5 pt-[18px] ${mono}`}>
            <h2 className="text-[21px] leading-7 text-[#6a716e]">YOUR PROMPT</h2>
            <p className="text-2xl leading-7">"Build a pyramid"</p>
          </section>
          <div className={`w-[414px] shrink-0 ${mono}`}>
            <div className="flex h-[50px] items-center justify-center gap-5 rounded-md bg-[#29ffa4]">
              <button type="button" className="pt-0.5 text-[23px]">DOWNLOAD</button>
              <div className="grid h-[31px] w-[104px] items-center rounded-sm bg-[#27f29c]">
                <select aria-label="Format" className="col-start-1 row-start-1 w-full appearance-none bg-transparent pl-4 text-[21px]"><option>GLTF</option></select>
                <svg viewBox="0 0 12 8" className="col-start-1 row-start-1 mr-1.5 h-2 w-3 justify-self-end" fill="none" stroke="#1e1e1e" strokeWidth="1.800"><path d="m1 1 5 5.500L11 1" /></svg>
              </div>
            </div>
            <div className="flex h-[50px] items-center pl-[75px] text-[23px]">
              <span className="mb-0.5">Rate</span>
              <button type="button" aria-label="Bad" className="ml-[75px] h-7 w-[30px]">
                <svg viewBox="0 0 30 28" fill="#1e1e1e"><rect x="0" y="1" width="7" height="17" rx="1" /><path d="M9 4c0-2 1-3 3-3h12c3 0 4 2 4 4 2 2 2 4 1 5 2 2 1 5-1 6-1 3-3 3-8 3l1 6c0 3-4 4-5 1-1-4-4-6-7-9z" /></svg>
              </button>
              <button type="button" aria-label="Good" className="ml-[74px] h-7 w-[30px]">
                <svg viewBox="0 0 30 28" fill="#1e1e1e"><rect x="23" y="10" width="7" height="17" rx="1" /><path d="M21 24c0 2-1 3-3 3H6c-3 0-4-2-4-4-2-2-2-4-1-5-2-2-1-5 1-6 1-3 3-3 8-3L9 3c0-3 4-4 5-1 1 4 4 6 7 9z" /></svg>
              </button>
            </div>
          </div>
        </div>
        <Pyramid />
      </main>
    </div>
  );
}

/* ---------- taskbar ---------- */

const WinLogo = () => <svg viewBox="0 0 20 20" className="h-5 w-5" fill="#fff"><path d="M0 3 8 2v7.500H0zM9 1.800 20 .2v9.300H9zM0 10.500h8V18l-8-1zM9 10.500h11v9.300L9 18.200z" /></svg>;
const Search = () => <svg viewBox="0 0 28 28" className="h-7 w-7" fill="none" stroke="#fff" strokeWidth="3" strokeLinecap="round"><circle cx="17" cy="11" r="9.500" /><path d="m10 18-8 8" /></svg>;
const Edge = () => (
  <svg viewBox="0 0 30 30" className="h-[30px] w-[30px]">
    <circle cx="15" cy="15" r="15" fill="url(#edgeLow)" />
    <path d="M0 14C1 5 8 0 15 0c9 0 15 6 15 13 0 5-4 7-8 7-4 0-5-1-4-3 2-5-2-8-7-8C6 9 1 11 0 14" fill="url(#edgeTop)" />
    <path d="M11 11c-6 6-3 16 6 19 5 0 9-3 11-7-9 4-17-2-14-9 1-2 0-3-3-3" fill="#114a8c" /><path d="M18 14c2 3-1 3 0 5 3 3 8 2 12-1l-2 5c-9 4-17-2-14-9 1-2 3-2 4 0" fill="#1a2742" />
  </svg>
);
const Paint = () => (
  <svg viewBox="0 0 30 30" className="h-[30px] w-[30px]">
    <path d="M14 5c9 0 13 5 12 12-1 8-10 11-15 11-3 0-1-5-4-6-3 0-5 3-6 0C-1 14 5 5 14 5" fill="#d4e8f4" />
    <circle cx="5" cy="15" r="2.300" fill="#e04848" /><circle cx="10" cy="10.500" r="2.400" fill="#58b840" /><circle cx="16.500" cy="9" r="2.600" fill="#f0b020" /><circle cx="13" cy="17" r="1.800" fill="#1a2742" />
    <path d="m15 28 8-20 3 1-8 19z" fill="#dc8c3c" /><path d="m22 3 7-3 1 5-3 3-4-1z" fill="#b8875a" />
  </svg>
);
const Opera = () => <svg viewBox="0 0 28 28" className="h-7 w-7"><path fillRule="evenodd" d="M14 0a14 14 0 1 0 0 28 14 14 0 0 0 0-28m0 4c4 0 6 5 6 10s-2 10-6 10-6-5-6-10 2-10 6-10" fill="url(#opera)" /></svg>;
const Chrome = () => (
  <svg viewBox="0 0 30 30" className="h-[30px] w-[30px]">
    <circle cx="15" cy="15" r="15" fill="#fbc116" /><path d="M15 15 2 7.500A15 15 0 0 0 15 30l6.500-11.500z" fill="#2a9a48" /><path d="M15 15 2 7.500A15 15 0 0 1 28 7.500H15z" fill="#e33b2e" /><path d="M15 8h13.300L22 18.500 15 15z" fill="#fbc116" /><path d="M2 7.500 9 19l6-4V8z" fill="#e33b2e" /><path d="M2 7.500 8.500 19 15 22l-3 8A15 15 0 0 1 2 7.500" fill="#2a9a48" />
    <circle cx="15" cy="15" r="7" fill="#fff" /><circle cx="15" cy="15" r="5.500" fill="#2f7de0" />
  </svg>
);
const Folder = () => <svg viewBox="0 0 28 24" className="h-6 w-7"><path d="M0 1h11l2 2h14v6H0z" fill="#d89c10" /><path d="M0 4h28v18H0z" fill="#fcd468" /><path d="M5 23v-9a2 2 0 0 1 2-2h14a2 2 0 0 1 2 2v9h-5v-6h-8v6z" fill="#3e90d0" /></svg>;
const M365 = () => <svg viewBox="0 0 28 28" className="h-7 w-7"><path d="M14 0 2 7v13l6 4 2-3V9l9-6z" fill="url(#m1)" /><path d="M14 0 10 3v6l8 4v5l8 2V7z" fill="url(#m2)" /><path d="m4 21 10 7 12-7v-6l-8 3-8 3z" fill="url(#m3)" /></svg>;
const Word = () => (
  <svg viewBox="0 0 28 26" className="h-[26px] w-7">
    <path d="M14 3h14v20H14z" fill="#fff" stroke="#2b579a" /><path d="M16 7h10M16 10.500h10M16 14h10M16 17.500h10" stroke="#2b579a" strokeWidth="1.300" /><path d="m0 3 16-3v26L0 23z" fill="#2b579a" />
    <text x="8" y="18" textAnchor="middle" fill="#fff" fontFamily="Open Sans, sans-serif" fontWeight="700" fontSize="12">W</text>
  </svg>
);

const pinned: [string, React.ReactNode, string][] = [
  ["Edge", <Edge />, ""], ["Paint", <Paint />, ""], ["Opera", <Opera />, ""], ["Chrome", <Chrome />, ""], ["Explorer", <Folder />, "open"],
  ["Microsoft 365", <M365 />, ""], ["Word", <Word />, "stack"],
];

const Task = ({ label, mark, children }: Kids & { label: string; mark?: string }) => (
  <button type="button" aria-label={label} className="relative flex h-[59px] w-full shrink-0 items-center justify-center">
    {children}
    {mark && <span className={`absolute right-0 h-12 bg-[#76b9ed] ${mark === "stack" ? "w-[5px] border-l-2 border-[#5a90bc]" : "w-[3px]"}`} />}
  </button>
);

function Starters() {
  return (
    <>
      <button type="button" aria-label="Start" className="flex h-[49px] w-full shrink-0 items-center justify-center"><WinLogo /></button>
      <button type="button" aria-label="Search" className="flex h-[54px] w-full shrink-0 items-center justify-center"><Search /></button>
    </>
  );
}

function Taskbar() {
  return (
    <nav aria-label="Taskbar" className="flex w-[78px] shrink-0 flex-col items-center bg-[#1a2742]">
      <Starters />
      {pinned.slice(0, 2).map(([l, icon]) => <Task key={l} label={l}>{icon}</Task>)}
      <span className="h-[15px] shrink-0" />
      <Starters />
      {pinned.map(([l, icon, mark]) => <Task key={l} label={l} mark={mark}>{icon}</Task>)}
      <button type="button" aria-label="Chrome window" className="relative flex h-[58px] w-full shrink-0 items-center justify-center border-r-[3px] border-[#76b9ed] bg-[#49536a] pl-[3px]">
        <Chrome />
        <span className="absolute bottom-3 right-[19px] flex h-5 w-5 items-center justify-center rounded-full bg-[#c2185b] text-xs text-white">T</span>
      </button>
      <div className="mt-auto flex w-full flex-col items-center">
        <button type="button" aria-label="Help" className="mb-[22px]">
          <svg viewBox="0 0 30 26" className="h-[27px] w-[31px]"><circle cx="14" cy="13" r="12" fill="#1898d0" stroke="#fff" strokeWidth="2" /><path d="M9.500 10c0-6 9-6 9-.5 0 4-4.500 3.500-4.500 7M14 18.500V21" fill="none" stroke="#fff" strokeWidth="2.800" /><circle cx="24" cy="19" r="6" fill="#e8a820" /><path d="M24 18v4M24 15v1.500" stroke="#fff" strokeWidth="1.800" /></svg>
        </button>
        <button type="button" className="flex flex-col items-center text-base leading-5 text-white">
          <svg viewBox="0 0 30 20" className="mb-1 h-5 w-[30px]"><path d="M6 20a6 6 0 0 1 0-12 9 9 0 0 1 17-1 6.500 6.500 0 0 1 1 13z" fill="url(#cloud)" /></svg>
          2°C
        </button>
        <button type="button" aria-label="Show hidden icons" className="mb-[3px] ml-[17px] mt-8 self-start"><svg viewBox="0 0 10 16" className="h-4 w-2.5" fill="none" stroke="#fff" strokeWidth="1.200"><path d="M8 0 1 8l7 8" /></svg></button>
      </div>
    </nav>
  );
}

export default function App() {
  return (
    <div className="flex h-screen overflow-hidden bg-white font-['Open_Sans','Noto_Sans',sans-serif]">
      <Defs />
      <div className="flex min-w-0 flex-1 flex-col">
        <FreeCad />
        <BrowserBars />
        <ZooPage />
      </div>
      <Taskbar />
    </div>
  );
}
